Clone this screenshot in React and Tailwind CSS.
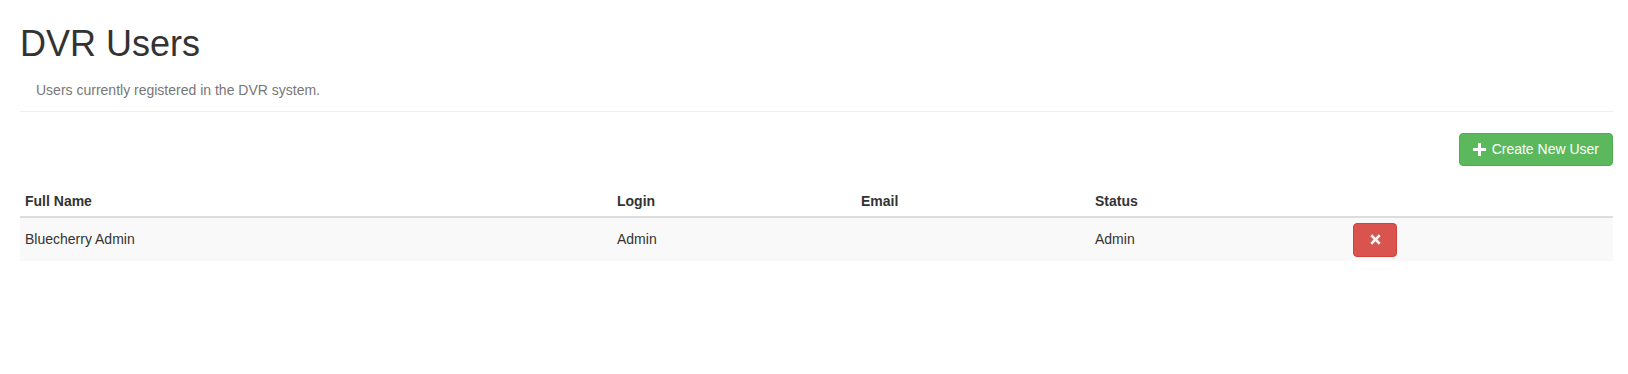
import React from 'react';

const users = [
    { id: 1, name: 'Bluecherry Admin', login: 'Admin', email: '', status: 'Admin' }
];

const PlusIcon = () => (
    <svg width="13" height="13" viewBox="0 0 13 13" className="inline-block">
        <path d="M5 0h3v5h5v3H8v5H5V8H0V5h5z" fill="currentColor" />
    </svg>
);

const RemoveIcon = () => (
    <svg width="11" height="11" viewBox="0 0 12 12" className="inline-block">
        <path d="M2.4 0.4L6 4L9.6 0.4L11.6 2.4L8 6L11.6 9.6L9.6 11.6L6 8L2.4 11.6L0.4 9.6L4 6L0.4 2.4z" fill="currentColor" />
    </svg>
);

export default function App() {
    return (
        <div className="min-h-[374px] bg-white pl-[20px] pr-[15px] font-['Liberation_Sans',Arial,sans-serif] text-[14px] leading-[20px] text-[#333]">
            <h1 className="pt-[24px] text-[36px] leading-[1.1] font-normal text-[#333]">DVR Users</h1>
            <p className="mt-[16px] pl-[16px] text-[#777]">Users currently registered in the DVR system.</p>
            <div className="mt-[11px] border-t border-[#eee]" />

            <div className="mt-[21px] flex justify-end">
                <button
                    type="button"
                    className="flex h-[33px] items-center gap-[6px] rounded-[4px] border border-[#4cae4c] bg-[#5cb85c] px-[13px] text-[14px] text-white"
                >
                    <PlusIcon />
                    <span>Create New User</span>
                </button>
            </div>

            <table className="mt-[20px] w-full table-fixed border-collapse">
                <colgroup>
                    <col className="w-[592px]" />
                    <col className="w-[244px]" />
                    <col className="w-[234px]" />
                    <col className="w-[258px]" />
                    <col />
                </colgroup>
                <thead>
                    <tr className="border-b-2 border-[#ddd]">
                        <th className="p-[5px] text-left font-bold">Full Name</th>
                        <th className="p-[5px] text-left font-bold">Login</th>
                        <th className="p-[5px] text-left font-bold">Email</th>
                        <th className="p-[5px] text-left font-bold">Status</th>
                        <th className="p-[5px]"></th>
                    </tr>
                </thead>
                <tbody>
                    {users.map((u) => (
                        <tr key={u.id} className="bg-[#f9f9f9]">
                            <td className="px-[5px] py-[4px]">{u.name}</td>
                            <td className="px-[5px] py-[4px]">{u.login}</td>
                            <td className="px-[5px] py-[4px]">{u.email}</td>
                            <td className="px-[5px] py-[4px]">{u.status}</td>
                            <td className="px-[5px] pt-[5px] pb-[4px]">
                                <button
                                    type="button"
                                    className="flex h-[34px] w-[44px] items-center justify-center rounded-[4px] border border-[#d43f3a] bg-[#d9534f] text-white"
                                >
                                    <RemoveIcon />
                                </button>
                            </td>
                        </tr>
                    ))}
                </tbody>
            </table>
        </div>
    );
}
